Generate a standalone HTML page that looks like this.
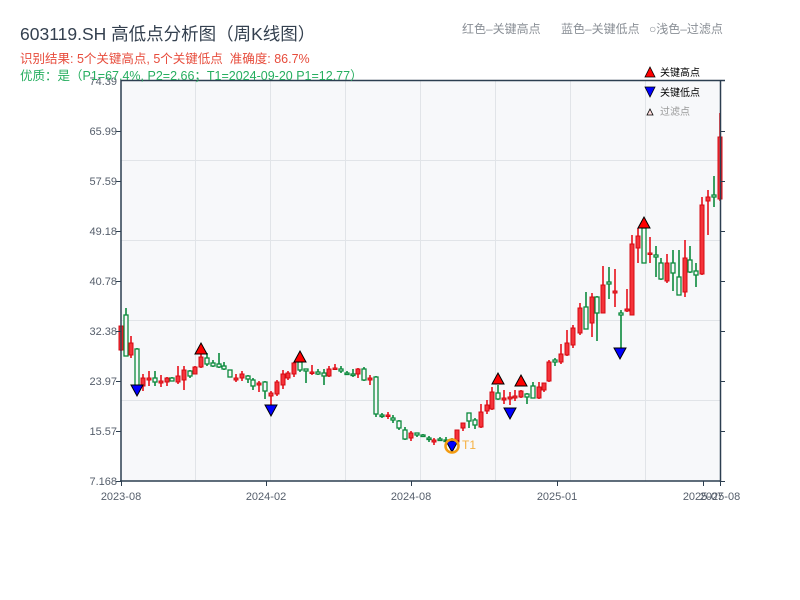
<!DOCTYPE html>
<html><head><meta charset="utf-8"><style>
html,body{margin:0;padding:0;background:#fff;width:800px;height:600px;overflow:hidden}
svg{display:block}
text{font-family:"Liberation Sans","Noto Sans CJK SC",sans-serif}
</style></head><body>
<svg id="s" width="800" height="600" xmlns="http://www.w3.org/2000/svg">
<rect x="121" y="80" width="599" height="401" fill="#f7f8fa"/>
<g stroke="#e1e4e8" stroke-width="1">
<line x1="121" y1="160.5" x2="720" y2="160.5"/><line x1="121" y1="240.5" x2="720" y2="240.5"/>
<line x1="121" y1="320.5" x2="720" y2="320.5"/><line x1="121" y1="400.5" x2="720" y2="400.5"/>
<line x1="195.5" y1="80" x2="195.5" y2="481"/><line x1="270.5" y1="80" x2="270.5" y2="481"/>
<line x1="345.5" y1="80" x2="345.5" y2="481"/><line x1="420.5" y1="80" x2="420.5" y2="481"/>
<line x1="495.5" y1="80" x2="495.5" y2="481"/><line x1="570.5" y1="80" x2="570.5" y2="481"/>
<line x1="645.5" y1="80" x2="645.5" y2="481"/>
</g>
<g id="c"></g>
<g stroke="#2c3e50" stroke-width="1.5" fill="none">
<line x1="121" y1="80" x2="121" y2="482"/><line x1="120" y1="481" x2="721" y2="481"/>
<line x1="121" y1="80.5" x2="725" y2="80.5"/><line x1="720.5" y1="80" x2="720.5" y2="482"/>
</g>
<g stroke="#2c3e50" stroke-width="1" id="ticks"></g>
<g font-size="11" fill="#555e6b" text-anchor="end">
<text x="117" y="85">74.39</text><text x="117" y="135">65.99</text><text x="117" y="185">57.59</text>
<text x="117" y="235">49.18</text><text x="117" y="285">40.78</text><text x="117" y="335">32.38</text>
<text x="117" y="385">23.97</text><text x="117" y="435">15.57</text><text x="117" y="485">7.168</text>
</g>
<g font-size="11" fill="#555e6b" text-anchor="middle">
<text x="121" y="500">2023-08</text><text x="266" y="500">2024-02</text><text x="411" y="500">2024-08</text>
<text x="557" y="500">2025-01</text><text x="703" y="500">2025-07</text><text x="720" y="500">2025-08</text>
</g>
<text x="20" y="40" font-size="17.5" fill="#34404f">603119.SH 高低点分析图（周K线图）</text>
<text x="20" y="63" font-size="12.5" fill="#e74c3c" xml:space="preserve">识别结果: 5个关键高点, 5个关键低点  准确度: 86.7%</text>
<text x="20" y="80" font-size="12.5" fill="#27ae60">优质：是（P1=67.4%, P2=2.66；T1=2024-09-20 P1=12.77）</text>
<g font-size="12" fill="#8a8f96">
<text x="462" y="33">红色–关键高点</text><text x="561" y="33">蓝色–关键低点</text><text x="649" y="33">○浅色–过滤点</text>
</g>
<g font-size="10">
<polygon points="645,77 655,77 650,67" fill="#f00" stroke="#000" stroke-width="0.8"/>
<text x="660" y="76" fill="#000">关键高点</text>
<polygon points="645,87 655,87 650,97" fill="#00f" stroke="#000" stroke-width="0.8"/>
<text x="660" y="96" fill="#000">关键低点</text>
<polygon points="647,115 653,115 650,109" fill="#fdd" stroke="#000" stroke-width="0.8"/>
<text x="660" y="115" fill="#999">过滤点</text>
</g>
<g id="m"></g>
<circle cx="452" cy="446" r="6.5" fill="none" stroke="#f39c12" stroke-width="2.5"/>
<text x="462" y="449" font-size="12" fill="#f5b041">T1</text>
</svg>
<script>
var d=[
[121,326,350,326,351,'r'],[126,315,356,308,356,'g'],[131,343,355,336,358,'r'],[137,349,388,348,388,'g'],
[143,378,386,374,391,'r'],[149,378,380,371,386,'r'],[155,378,382,371,386,'g'],[161,381,383,375,387,'r'],
[167,378,382,377,386,'r'],[172,378,381,377,381,'g'],[178,376,382,366,384,'r'],[184,370,380,366,390,'r'],
[190,371,376,370,378,'g'],[195,367,374,366,374,'r'],[201,357,367,348,368,'r'],[207,358,364,353,366,'g'],
[213,363,366,360,367,'g'],[219,364,367,353,368,'g'],[224,366,369,362,370,'g'],[230,370,377,370,377,'g'],
[236,378,380,374,382,'r'],[242,374,378,371,381,'r'],[248,376,379,375,383,'g'],[253,380,386,378,390,'g'],
[259,383,385,381,392,'r'],[265,382,391,381,399,'g'],[271,393,396,391,405,'r'],[277,382,394,380,396,'r'],
[283,374,385,370,389,'r'],[288,373,378,371,380,'r'],[294,363,374,362,377,'r'],[300,362,370,360,372,'g'],
[306,369,371,369,383,'g'],[312,372,373,365,375,'r'],[318,372,374,369,375,'g'],[324,373,376,369,385,'g'],
[329,369,376,366,377,'r'],[335,368,369,364,370,'r'],[341,369,371,366,373,'g'],[347,373,374,371,375,'g'],
[353,374,375,369,377,'g'],[358,369,374,368,378,'r'],[364,369,380,367,381,'g'],[370,378,380,375,385,'r'],
[376,377,414,376,417,'g'],[382,415,416,413,418,'g'],[388,415,416,412,419,'r'],[393,418,420,415,423,'g'],
[399,421,428,420,430,'g'],[405,430,439,427,440,'g'],[411,433,438,431,441,'r'],[417,433,435,433,437,'g'],
[423,435,436,434,437,'g'],[429,438,439,436,442,'g'],[434,440,442,438,445,'r'],[440,439,440,437,441,'g'],
[446,440,441,437,443,'g'],[452,440,442,438,446,'g'],[457,430,442,430,444,'r'],[463,423,428,423,431,'r'],
[469,413,421,413,428,'g'],[475,420,425,418,429,'g'],[481,412,427,404,428,'r'],[487,405,411,400,414,'r'],
[492,392,409,387,410,'r'],[498,393,399,385,400,'g'],[504,398,400,390,404,'r'],[510,397,399,392,405,'r'],
[515,396,398,390,401,'r'],[521,391,397,390,398,'r'],[527,394,397,393,404,'g'],[533,386,398,382,398,'g'],
[539,387,398,382,399,'r'],[544,383,390,383,392,'r'],[549,362,381,360,382,'r'],[555,360,362,358,366,'g'],
[561,354,362,344,364,'r'],[567,343,355,330,356,'r'],[573,328,345,325,348,'r'],[580,308,333,303,335,'r'],
[586,307,329,292,329,'g'],[592,297,323,293,337,'r'],[597,297,313,296,341,'g'],[603,285,313,266,313,'r'],
[609,282,284,267,299,'g'],[615,291,293,269,307,'r'],[621,313,315,310,348,'g'],[627,309,311,289,312,'r'],
[632,244,315,235,315,'r'],[638,236,248,228,263,'r'],[644,228,263,228,263,'g'],[650,253,254,237,263,'r'],
[656,255,257,246,277,'g'],[661,263,279,258,280,'g'],[667,263,281,254,283,'r'],[673,263,273,250,291,'g'],
[679,277,295,250,295,'g'],[685,258,292,240,297,'r'],[690,260,272,246,273,'g'],[696,271,275,263,287,'g'],
[702,205,274,197,275,'r'],[708,197,201,190,235,'r'],[714,195,197,176,207,'g'],[720,137,199,113,201,'r']
];
var c=document.getElementById('c'),h='';
d.forEach(function(a){
 var x=a[0],col=a[5]=='r'?'#e8101a':'#0b8a3c';
 h+='<line x1="'+x+'" y1="'+a[3]+'" x2="'+x+'" y2="'+a[4]+'" stroke="'+col+'" stroke-width="1.6"/>';
 var hh=Math.max(a[2]-a[1],1.5);
 if(a[5]=='r') h+='<rect x="'+(x-2)+'" y="'+a[1]+'" width="4" height="'+hh+'" fill="#f5333a" stroke="#d40a12" stroke-width="1"/>';
 else h+='<rect x="'+(x-2)+'" y="'+a[1]+'" width="4" height="'+hh+'" fill="#f7f8fa" stroke="#0b8a3c" stroke-width="1.3"/>';
});
c.innerHTML=h;
var m='';
function up(x,y){m+='<polygon points="'+(x-6)+','+(y+11)+' '+(x+6)+','+(y+11)+' '+x+','+y+'" fill="#f00" stroke="#000" stroke-width="1"/>';}
function dn(x,y){m+='<polygon points="'+(x-6)+','+(y-11)+' '+(x+6)+','+(y-11)+' '+x+','+y+'" fill="#00f" stroke="#000" stroke-width="1"/>';}
up(201,343);up(300,351);up(498,373);up(521,375);up(644,217);
dn(137,396);dn(271,416);dn(452,452);dn(510,419);dn(620,359);
document.getElementById('m').innerHTML=m;
var t='';
[131,181,231,281,331,381,431,481].forEach(function(y){t+='<line x1="116" y1="'+(y+.5)+'" x2="121" y2="'+(y+.5)+'"/><line x1="720" y1="'+(y+.5)+'" x2="725" y2="'+(y+.5)+'"/>';});
[121,266,411,557,703,720].forEach(function(x){t+='<line x1="'+(x+.5)+'" y1="481" x2="'+(x+.5)+'" y2="486"/>';});
document.getElementById('ticks').innerHTML=t;
</script>
</body></html>
